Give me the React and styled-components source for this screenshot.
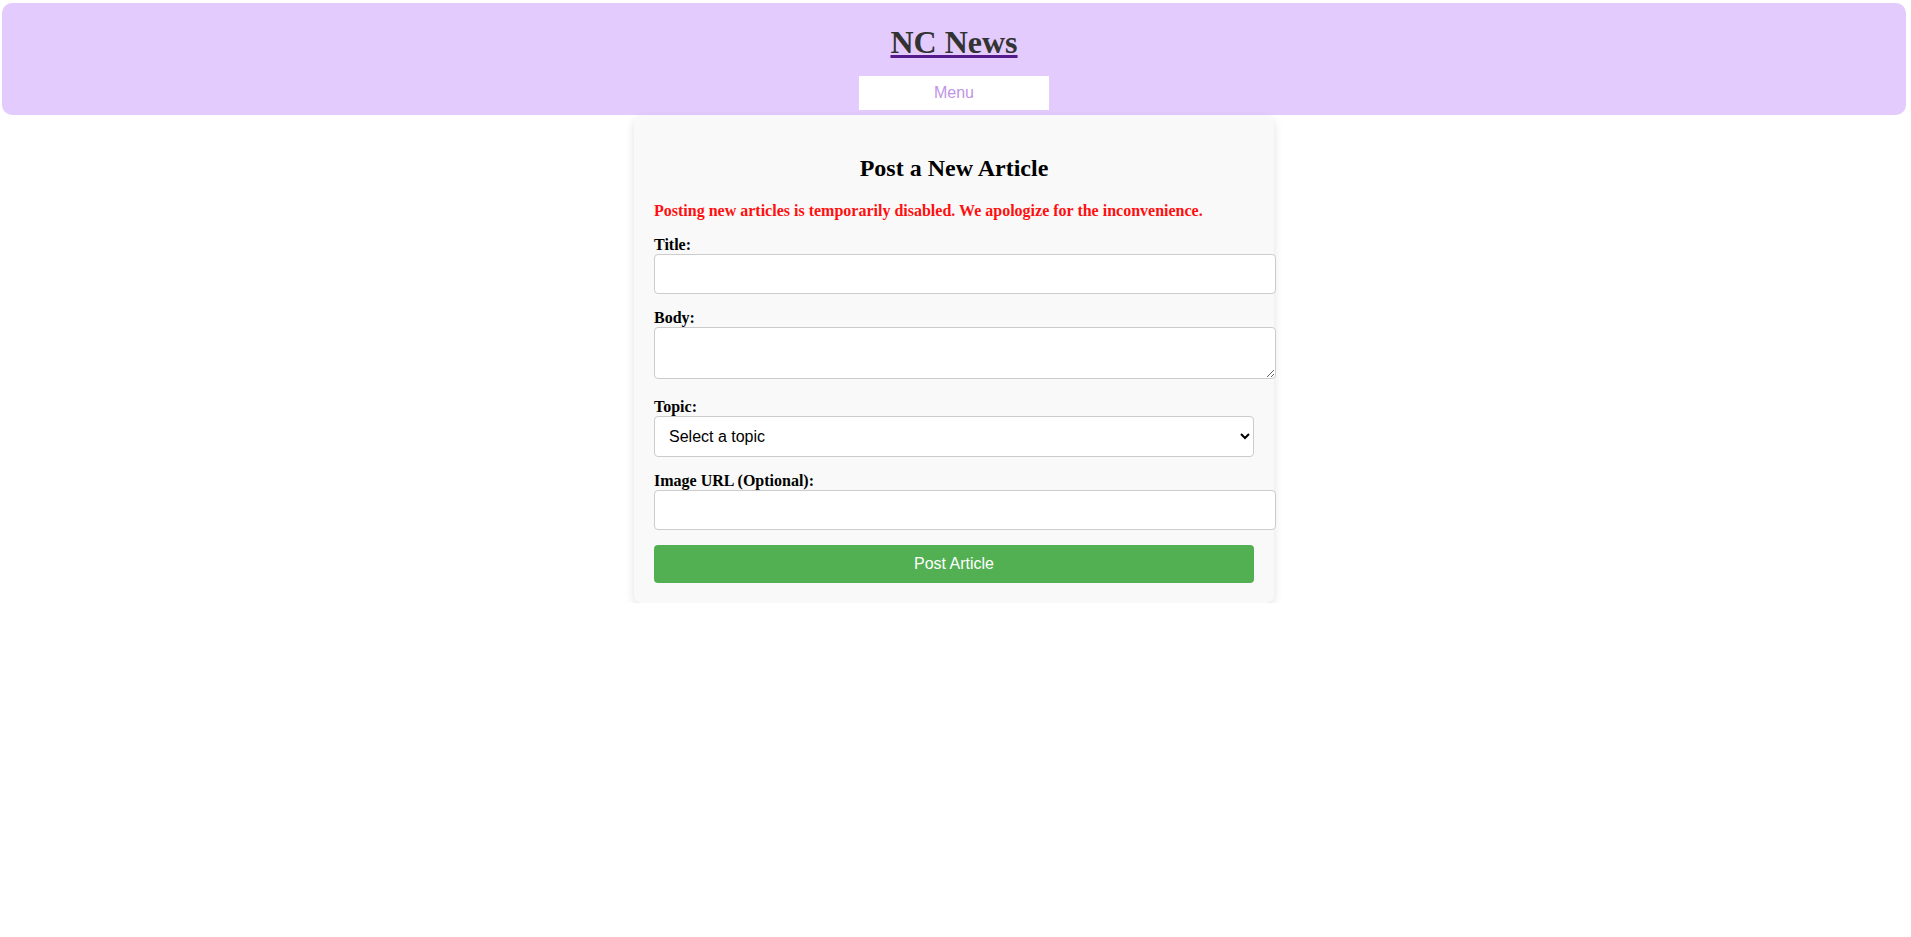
import React from "react";
import styled, { createGlobalStyle } from "styled-components";

const GlobalStyle = createGlobalStyle`
  html, body {
    margin: 0;
    padding: 0;
    background: #ffffff;
  }
  body {
    font-family: "Liberation Serif", "Times New Roman", serif;
    font-size: 16px;
    color: #000;
  }
`;

const Page = styled.div`
  padding: 3px 5px 0 2px;
`;

const Header = styled.header`
  display: flow-root;
  background: #e3cbfe;
  border-radius: 10px;
  text-align: center;
  padding-bottom: 5px;
`;

const SiteTitle = styled.h1`
  font-size: 32px;
  font-weight: bold;
  margin: 20.5px 0 15px;
`;

const TitleLink = styled.a`
  color: #333333;
  text-decoration: underline;
  text-decoration-color: #551a8b;
`;

const MenuButton = styled.button`
  display: block;
  margin: 0 auto;
  width: 190px;
  height: 34px;
  background: #ffffff;
  color: #c095e6;
  border: none;
  font-family: "Liberation Sans", Arial, sans-serif;
  font-size: 16px;
  padding: 0;
  cursor: pointer;
`;

const Card = styled.main`
  width: 600px;
  margin: 1px auto 0;
  padding: 20px;
  background: #f9f9f9;
  border-radius: 8px;
  box-shadow: 0 3px 10px rgba(0, 0, 0, 0.12);
`;

const Heading = styled.h2`
  text-align: center;
  font-size: 24px;
  margin: 19.92px 0;
`;

const Notice = styled.p`
  color: #ff1010;
  font-weight: bold;
  margin: 16px 0;
`;

const FormGroup = styled.div`
  margin-bottom: 15px;
`;

const Label = styled.label`
  display: block;
  font-weight: bold;
`;

const TextInput = styled.input`
  width: 100%;
  padding: 10px;
  border: 1px solid #ccc;
  border-radius: 4px;
  font-family: "Liberation Sans", Arial, sans-serif;
  font-size: 16px;
  background: #fff;
`;

const TextArea = styled.textarea`
  width: 100%;
  padding: 10px;
  border: 1px solid #ccc;
  border-radius: 4px;
  font-family: "Liberation Mono", monospace;
  font-size: 13.33px;
  background: #fff;
`;

const Select = styled.select`
  width: 100%;
  padding: 10px;
  border: 1px solid #ccc;
  border-radius: 4px;
  font-family: "Liberation Sans", Arial, sans-serif;
  font-size: 16px;
  background: #fff;
  color: #000;
`;

const SubmitButton = styled.button`
  width: 100%;
  padding: 10px;
  background: #52af52;
  color: #ffffff;
  border: none;
  border-radius: 4px;
  font-family: "Liberation Sans", Arial, sans-serif;
  font-size: 16px;
  cursor: pointer;
`;

export default function App() {
  return (
    <Page>
      <GlobalStyle />
      <Header>
        <SiteTitle>
          <TitleLink href="#">NC News</TitleLink>
        </SiteTitle>
        <MenuButton type="button">Menu</MenuButton>
      </Header>
      <Card>
        <Heading>Post a New Article</Heading>
        <Notice>
          Posting new articles is temporarily disabled. We apologize for the
          inconvenience.
        </Notice>
        <form onSubmit={(e) => e.preventDefault()}>
          <FormGroup>
            <Label htmlFor="title">Title:</Label>
            <TextInput id="title" type="text" />
          </FormGroup>
          <FormGroup>
            <Label htmlFor="body">Body:</Label>
            <TextArea id="body" rows={2} />
          </FormGroup>
          <FormGroup>
            <Label htmlFor="topic">Topic:</Label>
            <Select id="topic" defaultValue="">
              <option value="">Select a topic</option>
              <option value="coding">coding</option>
              <option value="football">football</option>
              <option value="cooking">cooking</option>
            </Select>
          </FormGroup>
          <FormGroup>
            <Label htmlFor="image">Image URL (Optional):</Label>
            <TextInput id="image" type="text" />
          </FormGroup>
          <SubmitButton type="submit">Post Article</SubmitButton>
        </form>
      </Card>
    </Page>
  );
}
